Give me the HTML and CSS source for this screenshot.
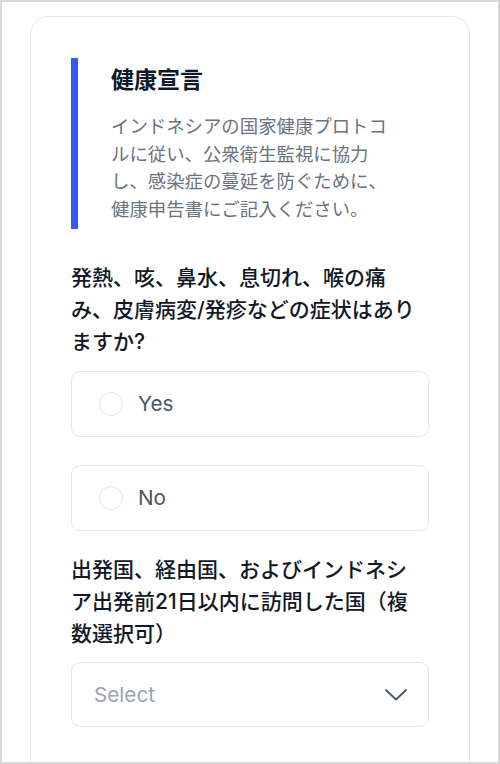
FILE: index.html
```html
<!DOCTYPE html>
<html lang="ja">
<head>
<meta charset="UTF-8">
<meta name="viewport" content="width=device-width, initial-scale=1.0">
<title>健康宣言</title>
<link rel="stylesheet" href="styles.css">
</head>
<body>

<div class="frame">
  <div class="card">

    <div class="intro">
      <h1 class="intro-title">健康宣言</h1>
      <p class="intro-text">インドネシアの国家健康プロトコルに従い、公衆衛生監視に協力し、感染症の蔓延を防ぐために、健康申告書にご記入ください。</p>
    </div>

    <div class="field">
      <div class="field-label">発熱、咳、鼻水、息切れ、喉の痛み、皮膚病変/発疹などの症状はありますか?</div>
      <div class="options">
        <label class="option">
          <span class="radio"></span>
          <span class="option-text">Yes</span>
        </label>
        <label class="option">
          <span class="radio"></span>
          <span class="option-text">No</span>
        </label>
      </div>
    </div>

    <div class="field">
      <div class="field-label">出発国、経由国、およびインドネシア出発前21日以内に訪問した国（複数選択可）</div>
      <div class="select-box">
        <span class="select-placeholder">Select</span>
        <svg class="select-arrow" width="22" height="12" viewBox="0 0 22 12" fill="none">
          <path d="M1 1 L11 10.5 L21 1" stroke="#4b5563" stroke-width="1.8" stroke-linecap="round" stroke-linejoin="round"/>
        </svg>
      </div>
    </div>

  </div>
</div>

</body>
</html>
```

FILE: styles.css
```css
body {
  margin: 0;
  background: #fff;
  font-family: Inter, "Noto Sans CJK JP", sans-serif;
}

.frame {
  height: 764px;
  box-sizing: border-box;
  border: 2px solid #d9d9d9;
  padding: 14px 26px 0 28px;
  overflow: hidden;
}

.card {
  width: 440px;
  min-height: 800px;
  box-sizing: border-box;
  border: 1px solid #e5e7eb;
  border-radius: 18px;
  padding: 41px 40px 40px 40px;
  background: #fff;
}

.intro {
  border-left: 7px solid #3558fd;
  padding: 6px 0 6px 33px;
  margin-bottom: 33px;
}

.intro-title {
  margin: 0 0 17px 0;
  font-size: 23px;
  line-height: 32px;
  font-weight: 700;
  color: #111827;
}

.intro-text,
.field-label {
  font-kerning: none;
  text-spacing-trim: space-all;
}

.intro-text {
  margin: 0;
  max-width: 285px;
  font-size: 18.4px;
  line-height: 27.6px;
  color: #6b7280;
}

.field {
  margin-bottom: 23px;
}

.field-label {
  max-width: 350px;
  font-size: 21px;
  line-height: 32px;
  font-weight: 500;
  color: #111827;
  margin-bottom: 12.5px;
}

.options {
  display: flex;
  flex-direction: column;
  gap: 28px;
}

.option {
  display: flex;
  align-items: center;
  gap: 15px;
  height: 66px;
  box-sizing: border-box;
  border: 1px solid #e5e7eb;
  border-radius: 9px;
  padding-left: 27px;
  cursor: pointer;
}

.radio {
  width: 24px;
  height: 24px;
  box-sizing: border-box;
  border: 1.5px solid #e1e3e8;
  border-radius: 50%;
}

.option-text {
  font-size: 20.7px;
  color: #4b5563;
}

.select-box {
  display: flex;
  align-items: center;
  justify-content: space-between;
  height: 65px;
  box-sizing: border-box;
  border: 1px solid #e5e7eb;
  border-radius: 9px;
  padding: 0 21px 0 22px;
}

.select-placeholder {
  font-size: 20.7px;
  color: #9ca3af;
}
```
